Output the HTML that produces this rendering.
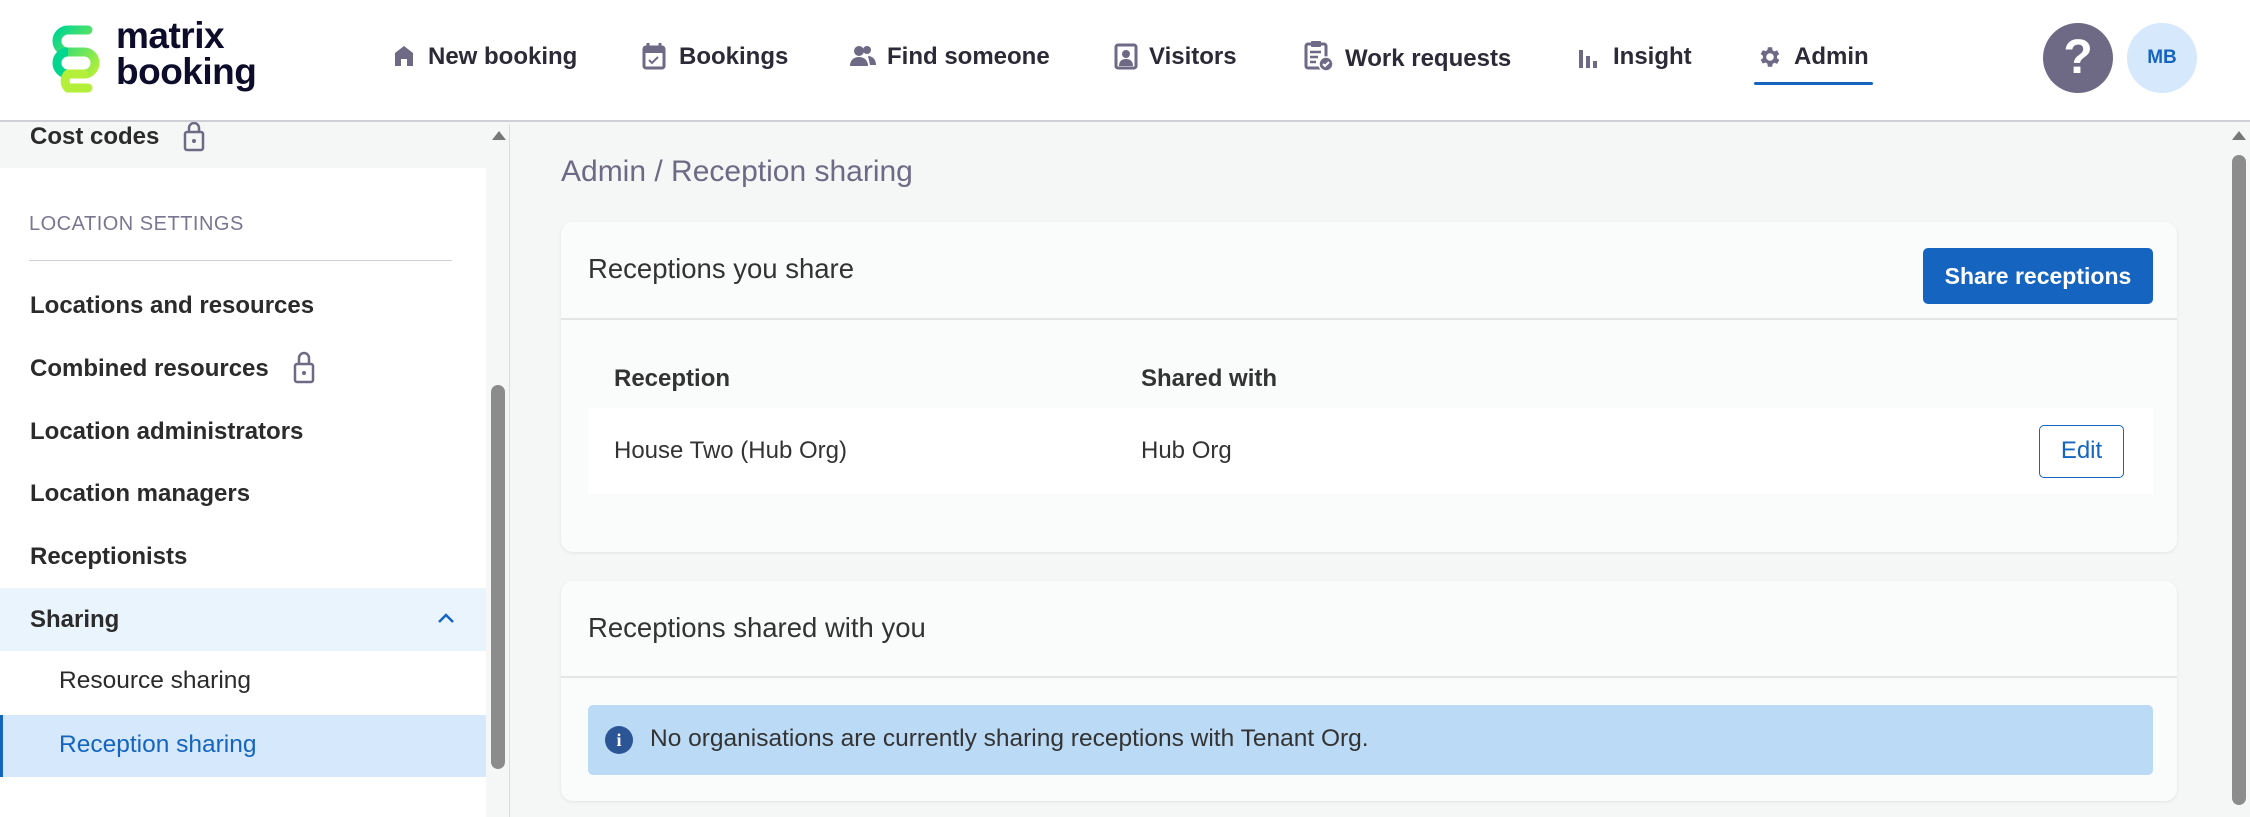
<!DOCTYPE html>
<html><head><meta charset="utf-8"><style>
*{box-sizing:border-box;margin:0;padding:0}
body{width:2250px;height:817px;overflow:hidden;background:#f5f6f6;font-family:"Liberation Sans",sans-serif;color:#2b2b2b;position:relative}
.a{position:absolute;white-space:nowrap}
.hdr{position:absolute;left:0;top:0;width:2250px;height:122px;background:#fff;border-bottom:2px solid #cfd0d6}
.nav{font-size:24px;color:#2b2a36;top:43px}
.ico{position:absolute;top:44px}
.side{position:absolute;left:0;top:124px;width:486px;height:693px;background:#fff}
.si{font-size:24px;font-weight:bold;color:#2b2b2b;left:30px}
.card{position:absolute;background:#fafbfb;border-radius:12px;box-shadow:0 1px 3px rgba(0,0,0,.08)}
</style></head><body>
<div class="hdr"></div>
<!-- logo -->
<svg class="a" style="left:48px;top:24px" width="60" height="70" viewBox="0 0 60 70">
<defs><linearGradient id="g" x1="0" y1="0" x2="1" y2="1"><stop offset="0" stop-color="#00d68f"/><stop offset="1" stop-color="#b4ef3a"/></linearGradient></defs>
<path d="M40 6 H20 a11 11 0 0 0 0 22 H36 a11 11 0 0 1 0 22 H20 a11 11 0 0 0 0 -0" fill="none" stroke="url(#g)" stroke-width="9" stroke-linecap="round"/>
<path d="M20 28 a11 11 0 0 0 0 22 M36 50 a11 11 0 0 1 0 -0" fill="none" stroke="#00d68f" stroke-width="9"/>
<path d="M20 50 a11 11 0 0 0 0 0 M20 50 H36 M20 50 a10 10 0 0 0 0 14 H40" fill="none" stroke="#b4ef3a" stroke-width="9" stroke-linecap="round"/>
</svg>
<div class="a" style="left:116px;top:18px;font-size:37px;line-height:36px;font-weight:bold;color:#0d0d2b;letter-spacing:-0.5px">matrix<br>booking</div>
<!-- nav -->
<svg class="ico" style="left:393px" width="22" height="24" viewBox="0 0 22 24"><path d="M11 2 L20 9 V22 H14 V15 H8 V22 H2 V9Z" fill="#6e6a85"/></svg>
<div class="a nav" style="left:428px;font-weight:bold">New booking</div>
<svg class="ico" style="left:642px;top:42px" width="24" height="28" viewBox="0 0 24 28"><rect x="2" y="5" width="20" height="21" rx="2" fill="none" stroke="#6e6a85" stroke-width="3"/><rect x="2" y="5" width="20" height="6" fill="#6e6a85"/><path d="M6 1v6M18 1v6" stroke="#6e6a85" stroke-width="3"/><path d="M7 18l3 3 6-6" stroke="#6e6a85" stroke-width="2" fill="none"/></svg>
<div class="a nav" style="left:679px;font-weight:bold">Bookings</div>
<svg class="ico" style="left:850px" width="26" height="24" viewBox="0 0 26 24"><circle cx="9" cy="7" r="5" fill="#6e6a85"/><path d="M0 22c0-6 4-9 9-9s9 3 9 9z" fill="#6e6a85"/><circle cx="17" cy="6" r="4" fill="#6e6a85"/><path d="M18 12c4 0 8 3 8 9h-6" fill="#6e6a85"/></svg>
<div class="a nav" style="left:887px;font-weight:bold">Find someone</div>
<svg class="ico" style="left:1114px;top:42px" width="24" height="28" viewBox="0 0 24 28"><rect x="2" y="3" width="20" height="23" rx="2" fill="none" stroke="#6e6a85" stroke-width="3"/><circle cx="12" cy="12" r="4" fill="#6e6a85"/><path d="M5 24c0-5 3-7 7-7s7 2 7 7z" fill="#6e6a85"/></svg>
<div class="a nav" style="left:1149px;font-weight:bold">Visitors</div>
<svg class="ico" style="left:1304px;top:40px" width="30" height="32" viewBox="0 0 30 32"><rect x="2" y="4" width="20" height="24" rx="2" fill="none" stroke="#6e6a85" stroke-width="3"/><rect x="7" y="1" width="10" height="6" rx="1" fill="#6e6a85"/><path d="M6 12h11M6 17h8M6 22h6" stroke="#6e6a85" stroke-width="2.5"/><circle cx="22" cy="24" r="7" fill="#6e6a85" stroke="#fff" stroke-width="1.5"/><path d="M19 24l2 2 4-4" stroke="#fff" stroke-width="2" fill="none"/></svg>
<div class="a nav" style="left:1345px;font-weight:bold;top:45px">Work requests</div>
<svg class="ico" style="left:1578px;top:46px" width="20" height="22" viewBox="0 0 20 22"><rect x="1" y="4" width="4" height="18" fill="#6e6a85"/><rect x="8" y="10" width="4" height="12" fill="#6e6a85"/><rect x="15" y="15" width="4" height="7" fill="#6e6a85"/></svg>
<div class="a nav" style="left:1613px;font-weight:bold">Insight</div>
<svg class="ico" style="left:1757px" width="26" height="26" viewBox="0 0 24 24"><path fill="#6e6a85" d="M19.4 13a7.5 7.5 0 0 0 0-2l2.1-1.6-2-3.5-2.5 1a7 7 0 0 0-1.7-1L15 3h-4l-.4 2.7a7 7 0 0 0-1.7 1l-2.5-1-2 3.5L6.5 11a7.5 7.5 0 0 0 0 2l-2.1 1.6 2 3.5 2.5-1a7 7 0 0 0 1.7 1L11 21h4l.4-2.7a7 7 0 0 0 1.7-1l2.5 1 2-3.5zM13 15.5a3.5 3.5 0 1 1 0-7 3.5 3.5 0 0 1 0 7z" transform="translate(-1 0)"/></svg>
<div class="a nav" style="left:1794px;font-weight:bold">Admin</div>
<div class="a" style="left:1754px;top:82px;width:119px;height:3px;background:#1565c0;border-radius:2px"></div>
<div class="a" style="left:2043px;top:23px;width:70px;height:70px;border-radius:50%;background:#6e6a85;color:#fff;font-size:48px;font-weight:bold;text-align:center;line-height:70px">?</div>
<div class="a" style="left:2127px;top:23px;width:70px;height:70px;border-radius:50%;background:#d6e8fb;color:#1565c0;font-size:19px;font-weight:bold;text-align:center;line-height:70px">MB</div>
<!-- sidebar -->
<div class="side"></div>
<div class="a" style="left:0;top:124px;width:486px;height:44px;background:#f5f6f6"></div>
<div class="a si" style="top:123px">Cost codes</div>
<svg class="a" style="left:183px;top:122px" width="22" height="30" viewBox="0 0 22 30"><rect x="2" y="10" width="18" height="18" rx="2" fill="none" stroke="#6e6a85" stroke-width="2.5"/><path d="M6 10V6a5 5 0 0 1 10 0v4" fill="none" stroke="#6e6a85" stroke-width="2.5"/><circle cx="11" cy="19" r="2" fill="#6e6a85"/></svg>
<div class="a" style="left:29px;top:213px;font-size:20px;color:#7a7690;letter-spacing:0.5px">LOCATION SETTINGS</div>
<div class="a" style="left:29px;top:260px;width:423px;height:1px;background:#cfcdd8"></div>
<div class="a si" style="top:292px">Locations and resources</div>
<div class="a si" style="top:355px">Combined resources</div>
<svg class="a" style="left:293px;top:350px" width="22" height="34" viewBox="0 0 22 34"><rect x="2" y="14" width="18" height="18" rx="2" fill="none" stroke="#6e6a85" stroke-width="2.5"/><path d="M6 14V8a5 5 0 0 1 10 0v6" fill="none" stroke="#6e6a85" stroke-width="2.5"/><circle cx="11" cy="23" r="2" fill="#6e6a85"/></svg>
<div class="a si" style="top:418px">Location administrators</div>
<div class="a si" style="top:480px">Location managers</div>
<div class="a si" style="top:543px">Receptionists</div>
<div class="a" style="left:0;top:588px;width:486px;height:63px;background:#eaf4fd"></div>
<div class="a si" style="top:606px">Sharing</div>
<svg class="a" style="left:437px;top:612px" width="18" height="12" viewBox="0 0 18 12"><path d="M2 10l7-7 7 7" fill="none" stroke="#1565c0" stroke-width="2.5"/></svg>
<div class="a" style="left:59px;top:667px;font-size:24.5px;color:#2b2b2b">Resource sharing</div>
<div class="a" style="left:0;top:715px;width:486px;height:62px;background:#d6e8fb;border-left:3px solid #1565c0"></div>
<div class="a" style="left:59px;top:731px;font-size:24.5px;color:#1565c0">Reception sharing</div>
<!-- sidebar scrollbar -->
<div class="a" style="left:488px;top:124px;width:22px;height:693px;background:#f5f6f6;border-right:1px solid #ddd"></div>
<div class="a" style="left:492px;top:131px;width:0;height:0;border-left:7px solid transparent;border-right:7px solid transparent;border-bottom:9px solid #777"></div>
<div class="a" style="left:491px;top:385px;width:14px;height:384px;background:#8c8c8c;border-radius:7px"></div>
<!-- main -->
<div class="a" style="left:561px;top:155px;font-size:30px;color:#6e6a85">Admin / Reception sharing</div>
<div class="card" style="left:561px;top:222px;width:1616px;height:330px"></div>
<div class="a" style="left:561px;top:318px;width:1616px;height:2px;background:#e2e4e6"></div>
<div class="a" style="left:588px;top:253px;font-size:27.5px;color:#333">Receptions you share</div>
<div class="a" style="left:1923px;top:248px;width:230px;height:56px;background:#1565c0;border-radius:5px;color:#fff;font-size:23px;font-weight:bold;text-align:center;line-height:56px">Share receptions</div>
<div class="a" style="left:614px;top:365px;font-size:24px;font-weight:bold;color:#333">Reception</div>
<div class="a" style="left:1141px;top:365px;font-size:24px;font-weight:bold;color:#333">Shared with</div>
<div class="a" style="left:588px;top:408px;width:1565px;height:86px;background:#fff"></div>
<div class="a" style="left:614px;top:437px;font-size:24px;color:#333">House Two (Hub Org)</div>
<div class="a" style="left:1141px;top:437px;font-size:24px;color:#333">Hub Org</div>
<div class="a" style="left:2039px;top:425px;width:85px;height:53px;border:1.5px solid #1565c0;border-radius:5px;color:#1565c0;font-size:24px;text-align:center;line-height:50px;background:#fff">Edit</div>
<div class="card" style="left:561px;top:581px;width:1616px;height:220px"></div>
<div class="a" style="left:561px;top:676px;width:1616px;height:2px;background:#e2e4e6"></div>
<div class="a" style="left:588px;top:612px;font-size:27.5px;color:#333">Receptions shared with you</div>
<div class="a" style="left:588px;top:705px;width:1565px;height:70px;background:#bbdaf5;border-radius:5px"></div>
<div class="a" style="left:605px;top:726px;width:28px;height:28px;border-radius:50%;background:#2c5595;color:#fff;font-size:18px;font-weight:bold;text-align:center;line-height:28px;font-family:'Liberation Serif',serif">i</div>
<div class="a" style="left:650px;top:725px;font-size:24.5px;color:#333">No organisations are currently sharing receptions with Tenant Org.</div>
<!-- right scrollbar -->
<div class="a" style="left:2228px;top:124px;width:22px;height:693px;background:#f5f6f6"></div>
<div class="a" style="left:2232px;top:131px;width:0;height:0;border-left:7px solid transparent;border-right:7px solid transparent;border-bottom:9px solid #777"></div>
<div class="a" style="left:2232px;top:155px;width:14px;height:650px;background:#8c8c8c;border-radius:7px"></div>
</body></html>
